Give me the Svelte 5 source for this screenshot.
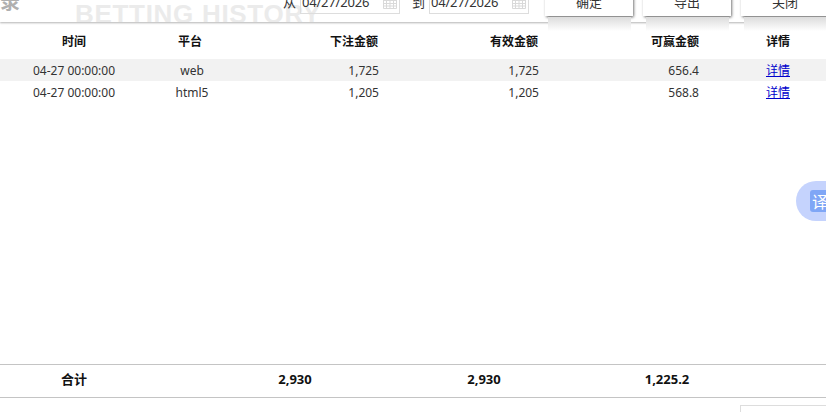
<script>
  const rows = [
    { time: '04-27 00:00:00', platform: 'web', bet: '1,725', valid: '1,725', win: '656.4' },
    { time: '04-27 00:00:00', platform: 'html5', bet: '1,205', valid: '1,205', win: '568.8' }
  ];
  const buttons = ['确定', '导出', '关闭'];
  const dates = [{ label: '从', value: '04/27/2026' }, { label: '到', value: '04/27/2026' }];
</script>

<div class="page">
  <header class="top">
    <div class="titles">
      <span class="title">记录</span>
      <span class="mark">BETTING HISTORY</span>
    </div>
    <div class="filters">
      {#each dates as d}
        <div class="date">
          <span class="lbl">{d.label}</span>
          <div class="input">
            <span>{d.value}</span>
            <svg width="14" height="12" viewBox="0 0 14 12" class="cal">
              <path d="M.5 .5h13v11H.5z M.5 3.5h13 M.5 6.5h13 M.5 9h13 M3.5 .5v11 M7 .5v11 M10.5 .5v11" fill="none" stroke="#d9d9d9" />
            </svg>
          </div>
        </div>
      {/each}
    </div>
    <div class="btns">
      {#each buttons as b}
        <button class="btn">{b}</button>
      {/each}
    </div>
  </header>

  <div class="grid head">
    <div class="c">时间</div>
    <div class="c">平台</div>
    <div class="r">下注金额</div>
    <div class="r">有效金额</div>
    <div class="r">可赢金额</div>
    <div class="c detail">详情</div>
  </div>

  <div class="body">
    {#each rows as r, i}
      <div class="grid row" class:odd={i === 0}>
        <div class="c">{r.time}</div>
        <div class="c">{r.platform}</div>
        <div class="r n">{r.bet}</div>
        <div class="r n">{r.valid}</div>
        <div class="r">{r.win}</div>
        <div class="c detail"><a href="#detail">详情</a></div>
      </div>
    {/each}
  </div>

  <div class="total">
    <div class="c">合计</div>
    <div class="c">2,930</div>
    <div class="c">2,930</div>
    <div class="c">1,225.2</div>
  </div>

  <div class="foot"><div class="box"></div></div>

  <div class="trans"><span>译</span></div>
</div>

<style>
  :global(body) {
    margin: 0;
    background: #fff;
    overflow: hidden;
  }
  .page {
    width: 826px;
    height: 412px;
    overflow: hidden;
    position: relative;
    display: flex;
    flex-direction: column;
    font-family: "Noto Sans", "Noto Sans CJK SC", sans-serif;
    font-size: 12px;
    color: #333;
    background: #fff;
  }
  .top {
    height: 22px;
    flex: none;
    display: flex;
    align-items: flex-start;
    background: #fff;
    box-shadow: 0 1px 2px rgba(0, 0, 0, .3);
    position: relative;
    z-index: 1;
  }
  .titles {
    width: 340px;
    margin-right: -58px;
    height: 22px;
    flex: none;
    overflow: hidden;
    display: flex;
    align-items: flex-start;
  }
  .title {
    font-size: 20px;
    font-weight: 700;
    color: #b0b0b0;
    line-height: 20px;
    margin: -8px 0 0 -20px;
    width: 95px;
    flex: none;
    white-space: nowrap;
  }
  .mark {
    font-family: "Liberation Sans", sans-serif;
    font-size: 26px;
    font-weight: 700;
    line-height: 30px;
    letter-spacing: .7px;
    color: #ebebeb;
    white-space: nowrap;
    margin-top: -1px;
  }
  .filters {
    display: flex;
    width: 263px;
    flex: none;
    position: relative;
  }
  .date {
    display: flex;
    width: 129px;
    flex: none;
  }
  .lbl {
    width: 17px;
    flex: none;
    font-size: 13px;
    line-height: 16px;
    margin-top: -6px;
    margin-left: 1px;
  }
  .input {
    height: 22px;
    margin-top: -9px;
    border: 1px solid #ddd;
    border-top: 0;
    display: flex;
    align-items: flex-end;
    justify-content: space-between;
    padding-left: 1px;
    padding-right: 2px;
    width: 95px;
    font-size: 13px;
    line-height: 18px;
    letter-spacing: -.2px;
    color: #333;
  }
  .input span {
    margin-bottom: 2px;
  }
  .cal {
    margin-bottom: 4px;
  }
  .btns {
    display: flex;
    gap: 10px;
  }
  .btn {
    width: 88px;
    height: 30px;
    margin-top: -14px;
    padding: 0;
    border: 0;
    background: #fff;
    font: inherit;
    font-size: 13px;
    color: #333;
    box-shadow: .5px 1px 3px rgba(0, 0, 0, .7);
    position: relative;
  }
  .btn::after {
    content: "";
    position: absolute;
    left: 3px;
    right: 2px;
    top: 31px;
    height: 14px;
    background: linear-gradient(#dcdcdc, #fff);
    pointer-events: none;
  }
  .grid {
    display: grid;
    grid-template-columns: 148px 84px 146px 160px 161px 127px;
    align-items: center;
    height: 22px;
  }
  .head {
    margin-top: 8px;
    margin-bottom: 7px;
    font-weight: 700;
    color: #111;
  }
  .body {
    flex: 1;
  }
  .odd {
    background: #f2f2f2;
  }
  .row {
    line-height: 22px;
    padding-top: 1px;
    height: 21px;
    color: #333;
  }
  .row .c:nth-child(2) {
    padding-left: 4px;
  }
  .c {
    text-align: center;
  }
  .r {
    text-align: right;
  }
  .n {
    margin-right: -1px;
  }
  .detail {
    padding-left: 31px;
  }
  a {
    color: #0000cc;
    text-decoration: underline;
  }
  .total {
    flex: none;
    height: 32px;
    border-top: 1px solid #c4c4c4;
    border-bottom: 1px solid #c4c4c4;
    display: grid;
    grid-template-columns: 148px 294px 84px 282px;
    align-items: center;
    font-weight: 700;
    font-size: 13px;
    line-height: 28px;
    color: #111;
  }
  .total .c {
    margin-top: -4px;
  }
  .foot {
    height: 14px;
    flex: none;
    display: flex;
    justify-content: flex-end;
    align-items: flex-end;
  }
  .box {
    width: 85px;
    height: 6px;
    border-left: 1px solid #ddd;
    border-top: 1px solid #ddd;
  }
  .trans {
    position: absolute;
    right: 0;
    top: 181px;
    width: 30px;
    height: 40px;
    background: #c5d3fd;
    border-radius: 20px 0 0 20px;
    display: flex;
    align-items: center;
    justify-content: flex-end;
  }
  .trans span {
    width: 16px;
    height: 22px;
    background: #7fa6f6;
    border-radius: 3px 0 0 3px;
    color: #fff;
    font-size: 16px;
    line-height: 22px;
    overflow: hidden;
    white-space: nowrap;
    padding-left: 2px;
    box-sizing: border-box;
    font-family: "Noto Sans CJK SC", sans-serif;
  }
</style>
